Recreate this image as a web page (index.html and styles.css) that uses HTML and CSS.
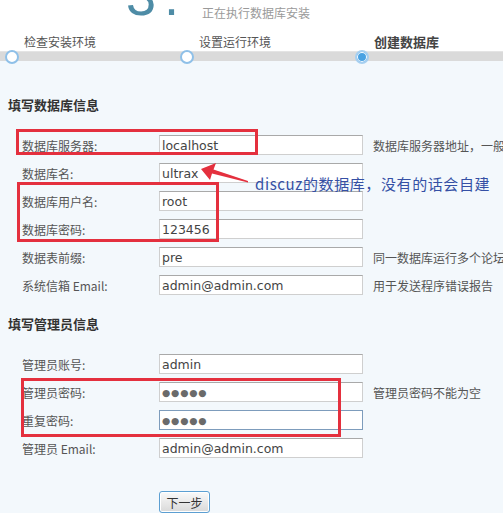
FILE: index.html
```html
<!DOCTYPE html>
<html lang="zh-CN">
<head>
    <meta charset="UTF-8">
    <title>Discuz! 安装 - 创建数据库</title>
    <link rel="stylesheet" href="styles.css">
</head>
<body>
    <div class="page">
        <div class="top">
            <span class="logo">3.</span>
            <span class="subtitle">正在执行数据库安装</span>
        </div>
        <div class="steps">
            <span class="step">检查安装环境</span>
            <span class="step">设置运行环境</span>
            <span class="step current">创建数据库</span>
        </div>
        <div class="bar">
            <span class="cell"><i class="dot"></i></span>
            <span class="cell"><i class="dot"></i></span>
            <span class="cell"><i class="dot active"></i></span>
        </div>

        <div class="main">
            <h2 class="sect">填写数据库信息</h2>
            <div class="fields">
                <div class="row">
                    <label>数据库服务器:</label>
                    <input type="text" value="localhost">
                    <span class="tip">数据库服务器地址，一般为 localhost</span>
                </div>
                <div class="row">
                    <label>数据库名:</label>
                    <input type="text" value="ultrax">
                </div>
                <div class="row">
                    <label>数据库用户名:</label>
                    <input type="text" value="root">
                </div>
                <div class="row">
                    <label>数据库密码:</label>
                    <input type="text" value="123456">
                </div>
                <div class="row">
                    <label>数据表前缀:</label>
                    <input type="text" value="pre">
                    <span class="tip">同一数据库运行多个论坛时，请修改前缀</span>
                </div>
                <div class="row">
                    <label>系统信箱 Email:</label>
                    <input type="text" value="admin@admin.com">
                    <span class="tip">用于发送程序错误报告</span>
                </div>
            </div>

            <h2 class="sect second">填写管理员信息</h2>
            <div class="fields">
                <div class="row">
                    <label>管理员账号:</label>
                    <input type="text" value="admin">
                </div>
                <div class="row">
                    <label>管理员密码:</label>
                    <input type="text" class="secret" value="●●●●●">
                    <span class="tip">管理员密码不能为空</span>
                </div>
                <div class="row">
                    <label>重复密码:</label>
                    <input type="text" class="secret focus" value="●●●●●">
                </div>
                <div class="row">
                    <label>管理员 Email:</label>
                    <input type="text" value="admin@admin.com">
                </div>
            </div>

            <div class="actions">
                <button type="button">下一步</button>
            </div>
        </div>

        <!-- пометки поверх скриншота -->
        <div class="mark mark-host"></div>
        <div class="mark mark-user"></div>
        <div class="mark mark-pass"></div>
        <svg class="arrow" width="60" height="30" viewBox="0 0 60 30">
            <polygon points="6,11 21,5 18.5,11.5 53,23 53,24.5 17,15.5 15,22" fill="#e4303e"/>
        </svg>
        <div class="note">discuz的数据库，没有的话会自建</div>
    </div>
</body>
</html>
```

FILE: styles.css
```css
html, body {
    margin: 0;
    overflow: hidden;
}
body {
    font-family: "Noto Sans CJK SC", sans-serif;
    font-size: 12px;
    color: #555;
    background: #f3f8fc;
}
.page {
    position: relative;
    height: 513px;
}
.top {
    display: flex;
    height: 30px;
    background: #fff;
    white-space: nowrap;
}
.logo {
    display: block;
    flex-shrink: 0;
    width: 76px;
    margin: -31px 0 0 126px;
    font-family: "Liberation Sans", sans-serif;
    font-size: 54px;
    line-height: 54px;
    letter-spacing: 8px;
    color: #4e8ca6;
}
.subtitle {
    margin-top: 5px;
    line-height: 16px;
    color: #9a9a9a;
}
.steps {
    display: flex;
    height: 17px;
    padding-top: 4px;
    background: #fff;
}
.step {
    flex-shrink: 0;
    width: 151px;
    padding-left: 24px;
    line-height: 16px;
    color: #555;
    white-space: nowrap;
}
.step.current {
    font-weight: bold;
    font-size: 13px;
    color: #444;
}
.bar {
    display: flex;
    align-items: center;
    height: 9px;
    background: #dadada;
    border-top: 1px solid #e4e4e4;
}
.cell {
    display: flex;
    flex-shrink: 0;
    width: 175px;
}
.dot {
    display: block;
    width: 10px;
    height: 10px;
    margin-left: 5px;
    border: 2px solid #8fc0e8;
    border-radius: 50%;
    background: #fff;
}
.dot.active {
    border-color: #a6cff0;
    background: #4aa2e2;
    box-shadow: inset 0 0 0 1px #fff;
}
.main {
    padding: 35px 0 0 8px;
}
.sect {
    margin: 0;
    height: 18px;
    line-height: 18px;
    font-size: 13px;
    font-weight: bold;
    color: #333;
}
.sect.second {
    margin-top: 16px;
}
.fields {
    margin-top: 17px;
}
.row {
    display: flex;
    align-items: center;
    height: 28px;
    white-space: nowrap;
}
.row label {
    flex-shrink: 0;
    width: 137px;
    padding-left: 14px;
    color: #555;
}
.row input {
    flex-shrink: 0;
    box-sizing: border-box;
    width: 204px;
    height: 20px;
    margin: 0;
    padding: 0 2px;
    border: 1px solid #cfcfcf;
    border-top-color: #a9a9a9;
    background: #fff;
    font-family: "DejaVu Sans", sans-serif;
    font-size: 12.5px;
    color: #444;
    outline: none;
}
.row input.secret {
    font-size: 9.5px;
    letter-spacing: 0.8px;
    color: #6a6a6a;
}
.row input.focus {
    border-color: #7d9cbc;
}
.tip {
    flex-shrink: 0;
    margin-left: 10px;
    color: #555;
}
.actions {
    margin-top: 29px;
    padding-left: 151px;
}
.actions button {
    width: 51px;
    height: 22px;
    padding: 0;
    border: 1px solid #5c9fd2;
    border-radius: 3px;
    background: linear-gradient(#fafafa, #d9d9d9);
    box-shadow: inset 0 0 0 1px #fff;
    font-family: "Noto Sans CJK SC", sans-serif;
    font-size: 12px;
    color: #333;
}

/* красные рамки и стрелка */
.mark {
    position: absolute;
    box-sizing: border-box;
    border: 3px solid #e4303e;
}
.mark-host {
    left: 16px;
    top: 129px;
    width: 242px;
    height: 26px;
}
.mark-user {
    left: 17px;
    top: 182px;
    width: 202px;
    height: 60px;
}
.mark-pass {
    left: 21px;
    top: 378px;
    width: 320px;
    height: 59px;
}
.arrow {
    position: absolute;
    left: 195px;
    top: 158px;
}
.note {
    position: absolute;
    left: 255px;
    top: 174px;
    line-height: 20px;
    font-size: 15px;
    letter-spacing: 0.6px;
    color: #3550a5;
    white-space: nowrap;
}
```
